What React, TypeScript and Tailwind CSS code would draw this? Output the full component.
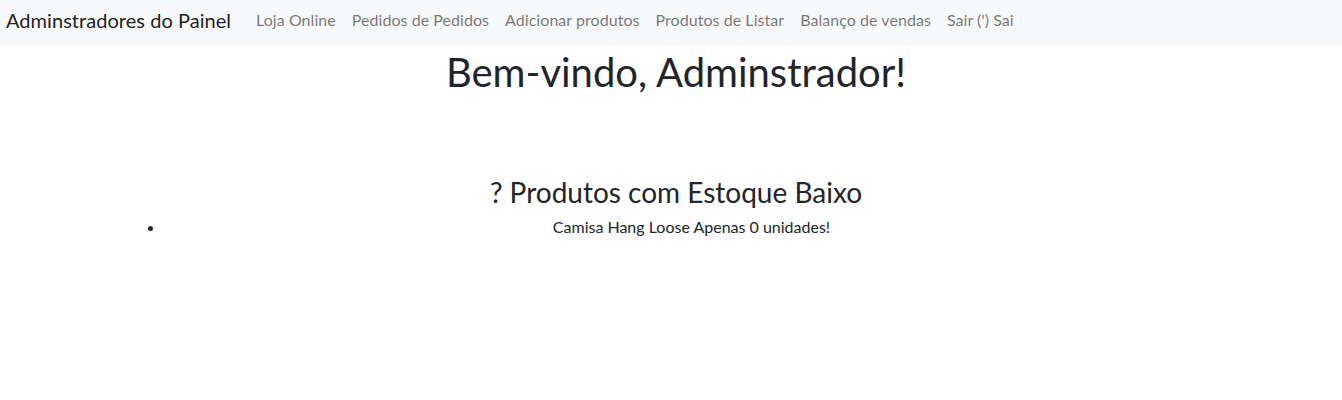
import React from 'react';

const links = [
  'Loja Online',
  'Pedidos de Pedidos',
  'Adicionar produtos',
  'Produtos de Listar',
  'Balanço de vendas',
  "Sair (') Sai",
];

const App: React.FC = () => {
  return (
    <div className="min-h-[400px] bg-white text-[#212529] font-['Lato','Noto_Sans',sans-serif]">
      <nav className="flex h-[46px] items-center bg-[#f8f9fa] pb-[7px] pl-[6px]">
        <a className="mr-[17px] text-[20px] leading-[30px] tracking-[0.04px] text-black/90">Adminstradores do Painel</a>
        <ul className="flex">
          {links.map((l) => (
            <li key={l}>
              <a className="block px-2 text-[16px] leading-6 tracking-[0.05px] text-black/55">{l}</a>
            </li>
          ))}
        </ul>
      </nav>

      <h1 className="pl-[10px] pt-[2px] text-center text-[40px] font-normal leading-[48px]">Bem-vindo, Adminstrador!</h1>

      <div className="mx-auto mt-[79px] w-[1116px]">
        <h3 className="pl-[10px] text-center text-[28px] leading-[34px]">? Produtos com Estoque Baixo</h3>
        <ul className="mt-[6px] list-disc pl-[52px] pr-[11px]">
          <li className="text-center text-[16px] leading-6">Camisa Hang Loose Apenas 0 unidades!</li>
        </ul>
      </div>
    </div>
  );
};

export default App;
